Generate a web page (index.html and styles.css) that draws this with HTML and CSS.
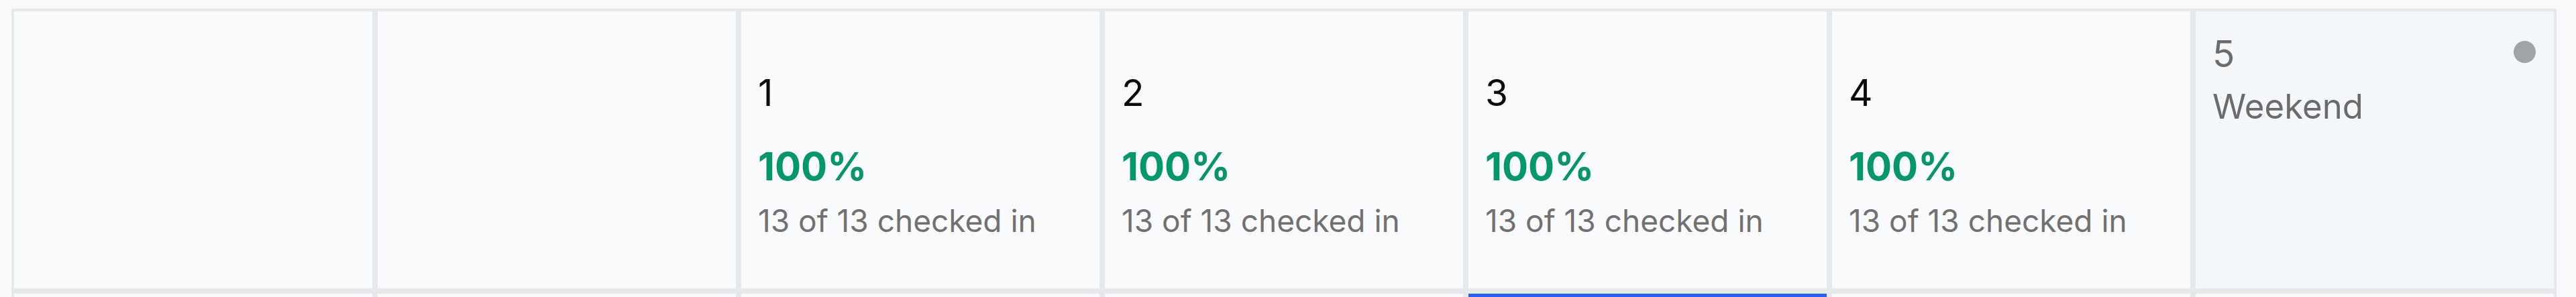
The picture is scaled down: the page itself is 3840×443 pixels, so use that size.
FILE: index.html
```html
<!DOCTYPE html>
<html lang="en">
<head>
  <meta charset="UTF-8">
  <meta name="viewport" content="width=device-width, initial-scale=1.0">
  <title>Attendance</title>
  <link rel="stylesheet" href="styles.css">
</head>
<body>
  <div class="calendar">
    <div class="day blank"></div>
    <div class="day blank"></div>
    <div class="day">
      <div class="day-num">1</div>
      <div class="rate">100%</div>
      <div class="count">13 of 13 checked in</div>
    </div>
    <div class="day">
      <div class="day-num">2</div>
      <div class="rate">100%</div>
      <div class="count">13 of 13 checked in</div>
    </div>
    <div class="day">
      <div class="day-num">3</div>
      <div class="rate">100%</div>
      <div class="count">13 of 13 checked in</div>
    </div>
    <div class="day">
      <div class="day-num">4</div>
      <div class="rate">100%</div>
      <div class="count">13 of 13 checked in</div>
    </div>
    <div class="day weekend">
      <div class="day-num">5</div>
      <div class="label">Weekend</div>
      <span class="dot"></span>
    </div>

    <div class="day next"></div>
    <div class="day next"></div>
    <div class="day next"></div>
    <div class="day next"></div>
    <div class="day next selected"></div>
    <div class="day next"></div>
    <div class="day next"></div>
  </div>
</body>
</html>
```

FILE: styles.css
```css
html, body {
  margin: 0;
  background: #f8f9fb;
  overflow: hidden;
}
body {
  padding: 13px 29px 0 17px;
  font-family: Inter, "Noto Sans", sans-serif;
}
.calendar {
  display: grid;
  grid-template-columns: repeat(7, 542px);
  grid-template-rows: 421px 120px;
}
.day {
  position: relative;
  box-sizing: border-box;
  border: 4px solid #e6e9ec;
  background: #f9fafb;
  padding: 88px 25px 0 25px;
  display: flex;
  flex-direction: column;
}
.day-num {
  font-size: 55px;
  color: #0c0c0c;
}
.rate {
  margin-top: 42px;
  font-size: 58px;
  font-weight: 700;
  color: #059669;
}
.count {
  margin-top: 18px;
  font-size: 46px;
  color: #717171;
}
.weekend {
  padding-top: 30px;
  background: #f4f7fa;
}
.weekend .day-num {
  color: #6b6b6b;
}
.weekend .label {
  margin-top: 15px;
  font-size: 51px;
  color: #6b6b6b;
}
.dot {
  position: absolute;
  top: 44px;
  right: 27px;
  width: 33px;
  height: 33px;
  border-radius: 50%;
  background: #a0a3a8;
}
.next {
  padding: 0;
}
.selected::before {
  content: "";
  display: block;
  height: 6px;
  background: #2563eb;
}
```
